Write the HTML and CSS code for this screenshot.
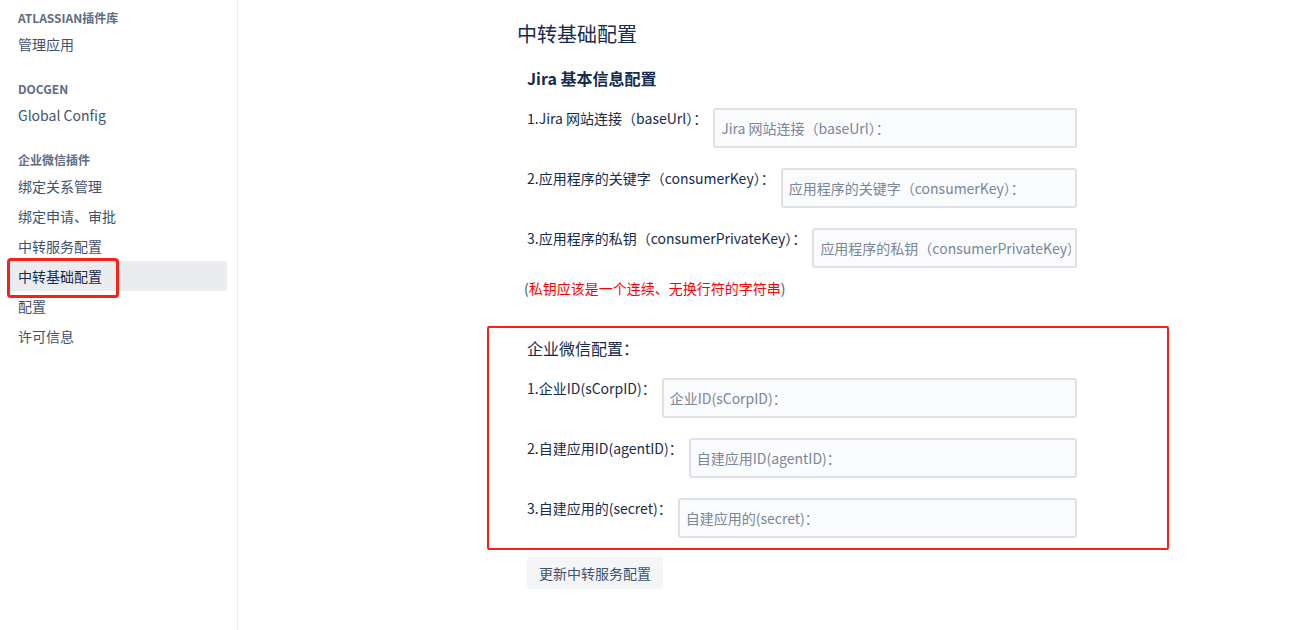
FILE: index.html
```html
<!DOCTYPE html>
<html>
<head>
  <meta charset="utf-8">
  <title>中转基础配置</title>
  <link rel="stylesheet" href="styles.css">
</head>
<body>
  <div class="page">
    <nav class="sidebar">
      <div class="nav-group">
        <div class="nav-heading">ATLASSIAN插件库</div>
        <a class="nav-item">管理应用</a>
      </div>
      <div class="nav-group">
        <div class="nav-heading">DOCGEN</div>
        <a class="nav-item">Global Config</a>
      </div>
      <div class="nav-group">
        <div class="nav-heading">企业微信插件</div>
        <a class="nav-item">绑定关系管理</a>
        <a class="nav-item">绑定申请、审批</a>
        <a class="nav-item">中转服务配置</a>
        <a class="nav-item active">中转基础配置<span class="mark mark-nav"></span></a>
        <a class="nav-item">配置</a>
        <a class="nav-item">许可信息</a>
      </div>
    </nav>

    <main class="main">
      <h1 class="page-title">中转基础配置</h1>
      <form class="config-form">
        <h2 class="section-title bold">Jira 基本信息配置</h2>
        <div class="form-row">
          <label for="baseUrl">1.Jira 网站连接（baseUrl）：</label>
          <input type="text" id="baseUrl" placeholder="Jira 网站连接（baseUrl）：">
        </div>
        <div class="form-row">
          <label for="consumerKey">2.应用程序的关键字（consumerKey）：</label>
          <input type="text" id="consumerKey" placeholder="应用程序的关键字（consumerKey）：">
        </div>
        <div class="form-row">
          <label for="privateKey">3.应用程序的私钥（consumerPrivateKey）：</label>
          <input type="text" id="privateKey" placeholder="应用程序的私钥（consumerPrivateKey）">
        </div>
        <p class="hint"><span class="paren">(</span>私钥应该是一个连续、无换行符的字符串<span class="paren">)</span></p>

        <div class="wechat-section">
          <h2 class="section-title">企业微信配置：</h2>
          <div class="form-row">
            <label for="corpId">1.企业ID(sCorpID)：</label>
            <input type="text" id="corpId" placeholder="企业ID(sCorpID)：">
          </div>
          <div class="form-row">
            <label for="agentId">2.自建应用ID(agentID)：</label>
            <input type="text" id="agentId" placeholder="自建应用ID(agentID)：">
          </div>
          <div class="form-row">
            <label for="secret">3.自建应用的(secret)：</label>
            <input type="text" id="secret" placeholder="自建应用的(secret)：">
          </div>
          <span class="mark mark-section"></span>
        </div>

        <button type="button" class="btn">更新中转服务配置</button>
      </form>
    </main>
  </div>
</body>
</html>
```

FILE: styles.css
```css
body {
  margin: 0;
  font-family: "Noto Sans CJK SC", "Noto Sans", sans-serif;
  font-size: 14px;
  color: #172b4d;
  background: #fff;
}
.page {
  display: flex;
  min-height: 630px;
}
.sidebar {
  width: 219px;
  padding: 10px 10px 10px 8px;
  border-right: 1px solid #ebecf0;
  flex-shrink: 0;
}
.nav-group {
  margin-bottom: 22px;
}
.nav-heading {
  padding-left: 10px;
  font-size: 12px;
  font-weight: bold;
  line-height: 16px;
  color: #5e6c84;
  margin-bottom: 3px;
}
.nav-item {
  position: relative;
  display: block;
  padding-left: 10px;
  height: 30px;
  line-height: 30px;
  color: #42526e;
  border-radius: 3px;
}
.nav-item.active {
  background: #ebecf0;
  color: #172b4d;
}
.mark {
  position: absolute;
  border: 3px solid #f5221b;
  border-radius: 4px;
  pointer-events: none;
}
.mark-nav {
  left: -1px;
  top: -3px;
  width: 106px;
  height: 34px;
}
.main {
  flex: 1;
  padding-left: 279px;
}
.page-title {
  margin: 22px 0 0;
  font-size: 20px;
  font-weight: normal;
  line-height: 24px;
}
.config-form {
  width: 550px;
  padding: 0 10px;
}
.section-title {
  margin: 0 0 20px;
  font-size: 16px;
  font-weight: normal;
  line-height: 20px;
}
.section-title.bold {
  font-weight: bold;
  margin-top: 22px;
}
.form-row {
  display: flex;
  align-items: flex-start;
  margin-bottom: 20px;
}
.form-row label {
  line-height: 20px;
  margin-right: 6px;
  white-space: nowrap;
}
.form-row input {
  flex: 1;
  min-width: 0;
  height: 40px;
  box-sizing: border-box;
  padding: 0 4px 0 6px;
  border: 2px solid #dfe1e6;
  border-radius: 3px;
  background: #fafbfc;
  font-family: inherit;
  font-size: 14px;
  color: #172b4d;
}
.form-row input::placeholder {
  color: #7a869a;
}
.hint {
  margin: -10px 0 0 -3px;
  line-height: 20px;
  color: #ff0000;
}
.hint .paren {
  color: #42526e;
}
.wechat-section {
  position: relative;
  margin-top: 39px;
  padding-top: 1px;
}
.wechat-section .form-row:last-of-type {
  margin-bottom: 0;
}
.mark-section {
  top: -11px;
  left: -40px;
  right: -92px;
  bottom: -12px;
  border-width: 2px;
  border-radius: 2px;
}
.btn {
  display: block;
  margin-top: 19px;
  height: 32px;
  padding: 0 12px;
  border: none;
  border-radius: 3px;
  background: #f4f5f7;
  color: #42526e;
  font-family: inherit;
  font-size: 14px;
}
```
